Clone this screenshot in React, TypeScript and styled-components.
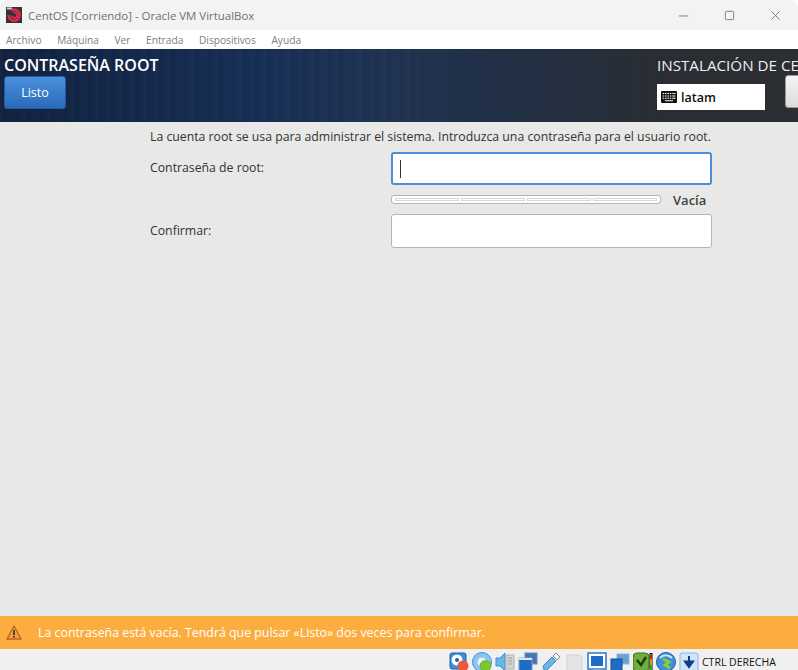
import styled, { createGlobalStyle } from "styled-components";

const GlobalStyle = createGlobalStyle`
  html, body {
    margin: 0;
    padding: 0;
    height: 100%;
    overflow: hidden;
  }
  #root {
    height: 100%;
  }
`;

const menuItems = ["Archivo", "Máquina", "Ver", "Entrada", "Dispositivos", "Ayuda"];

const App = () => {
  return (
    <Window>
      <GlobalStyle />
      <TitleBar>
        <AppIcon viewBox="0 0 16 16">
          <rect width="16" height="16" fill="#33343a" />
          <rect x="1" y="0.5" width="5" height="2" fill="#d4d4d4" />
          <path d="M5 3.6a5.6 5.6 0 1 1-2.4 4.4" fill="none" stroke="#e0284a" strokeWidth="2.4" />
          <path d="M7.4 5.6a2.8 2.8 0 1 1-1.6 3" fill="none" stroke="#e0284a" strokeWidth="2" />
        </AppIcon>
        <WindowTitle>CentOS [Corriendo] - Oracle VM VirtualBox</WindowTitle>
        <WindowControls>
          <ControlIcon viewBox="0 0 12 12">
            <path d="M1 6.5h10" />
          </ControlIcon>
          <ControlIcon viewBox="0 0 12 12">
            <rect x="1.5" y="1.5" width="9" height="9" rx="1" />
          </ControlIcon>
          <ControlIcon viewBox="0 0 12 12">
            <path d="M1.5 1.5l9 9M10.5 1.5l-9 9" />
          </ControlIcon>
        </WindowControls>
      </TitleBar>

      <MenuBar>
        {menuItems.map((item) => (
          <MenuItem key={item}>{item}</MenuItem>
        ))}
      </MenuBar>

      <Header>
        <HeaderLeft>
          <SpokeTitle>CONTRASEÑA ROOT</SpokeTitle>
          <DoneButton type="button">Listo</DoneButton>
        </HeaderLeft>
        <HeaderRight>
          <ProductTitle>INSTALACIÓN DE CENTOS 7</ProductTitle>
          <HeaderControls>
            <KeyboardBox>
              <KeyboardIcon viewBox="0 0 16 12">
                <rect width="16" height="12" rx="1" fill="#111" />
                <path
                  d="M1.6 2.5h1.6M4 2.5h1.6M6.4 2.5h1.6M8.8 2.5h1.6M11.2 2.5h1.6M13.2 2.5h1.4M1.6 5h1.6M4 5h1.6M6.4 5h1.6M8.8 5h1.6M11.2 5h3.2M1.6 7.3h1.6M4 7.3h1.6M6.4 7.3h1.6M8.8 7.3h1.6M11.2 7.3h3.2M4 9.7h8"
                  stroke="#fff"
                  strokeWidth="1.1"
                />
              </KeyboardIcon>
              <KeyboardLabel>latam</KeyboardLabel>
            </KeyboardBox>
            <HelpButton type="button" />
          </HeaderControls>
        </HeaderRight>
      </Header>

      <Content>
        <Intro>
          La cuenta root se usa para administrar el sistema. Introduzca una contraseña para el usuario root.
        </Intro>
        <FormGrid>
          <FieldLabel>Contraseña de root:</FieldLabel>
          <FocusedField>
            <Caret />
          </FocusedField>
          <MeterRow>
            <Meter>
              <MeterCell />
              <MeterCell />
              <MeterCell />
              <MeterCell />
            </Meter>
            <MeterLabel>Vacía</MeterLabel>
          </MeterRow>
          <FieldLabel $top={8}>Confirmar:</FieldLabel>
          <Field />
        </FormGrid>
      </Content>

      <WarningBar>
        <WarningIcon viewBox="0 0 16 15">
          <path d="M8 1L15 14H1Z" fill="#f0a044" stroke="#c4621c" strokeWidth="1.4" strokeLinejoin="round" />
          <path d="M8 5v5" stroke="#3b2a1a" strokeWidth="1.6" />
          <rect x="7.2" y="11" width="1.6" height="1.6" fill="#3b2a1a" />
        </WarningIcon>
        <WarningText>La contraseña está vacía. Tendrá que pulsar «Listo» dos veces para confirmar.</WarningText>
      </WarningBar>

      <StatusBar>
        <StatusIcon viewBox="0 0 20 20">
          <rect x="1" y="1" width="16" height="16" rx="2" fill="#3f8fd8" stroke="#1f5fa8" />
          <circle cx="8" cy="8" r="5.5" fill="#fff" />
          <circle cx="8" cy="8" r="2" fill="#1f5fa8" />
          <circle cx="14" cy="14" r="5.5" fill="#ea5a3a" />
        </StatusIcon>
        <StatusIcon viewBox="0 0 20 20">
          <circle cx="10" cy="10" r="9.5" fill="#8cc6ee" stroke="#3f8fd8" />
          <circle cx="10" cy="10" r="4.5" fill="#e4f2fb" />
          <circle cx="13.5" cy="14" r="5.5" fill="#78c832" stroke="#4f9a1a" strokeWidth="0.6" />
        </StatusIcon>
        <StatusIcon viewBox="0 0 20 20">
          <path d="M1 6h4l5-5v18l-5-5H1Z" fill="#6ab4e8" stroke="#3f8fd8" />
          <rect x="11" y="3" width="8" height="14" fill="#d4d4d4" stroke="#b0b0b0" />
          <path d="M13 6h4M13 9h4M13 12h4" stroke="#9a9a9a" />
        </StatusIcon>
        <StatusIcon viewBox="0 0 20 20">
          <rect x="7" y="1" width="12" height="11" fill="#3f78b8" stroke="#7a8aa0" />
          <rect x="1" y="6" width="13" height="13" fill="#1c6cc8" stroke="#8a9bb0" />
          <rect x="1" y="6" width="13" height="2" fill="#dfe7f0" />
        </StatusIcon>
        <StatusIcon viewBox="0 0 20 20">
          <path d="M2 14L11 5l4 4-9 9H3Z" fill="#6ab4e8" stroke="#3f8fd8" />
          <path d="M12 4l3-3 4 4-3 3Z" fill="#f2f2f2" stroke="#8a8a8a" />
        </StatusIcon>
        <StatusIcon viewBox="0 0 20 20">
          <path d="M3 3h12l3 2v14H3Z" fill="#e4e4e4" stroke="#d2d2d2" />
        </StatusIcon>
        <StatusIcon viewBox="0 0 20 20">
          <rect x="1" y="1" width="18" height="16" fill="#fff" stroke="#1c6cc8" strokeWidth="1.4" />
          <rect x="4" y="4" width="12" height="10" fill="#1c6cc8" />
          <rect x="6" y="17.5" width="8" height="1.5" fill="#9ab4d0" />
        </StatusIcon>
        <StatusIcon viewBox="0 0 20 20">
          <rect x="7" y="2" width="12" height="10" fill="#6a9fd8" stroke="#9ab4d0" />
          <rect x="1" y="7" width="11" height="12" fill="#1c6cc8" stroke="#144f96" />
        </StatusIcon>
        <StatusIcon viewBox="0 0 20 20">
          <rect x="0" y="1" width="16" height="18" rx="4" fill="#6fae3c" stroke="#3c6e1c" />
          <path d="M4 8l4 5 5-8" fill="none" stroke="#1f3d0c" strokeWidth="2.4" />
          <rect x="16.5" y="1" width="3" height="18" fill="#111" />
          <rect x="17.2" y="2" width="1.6" height="5" fill="#e22" />
          <rect x="17.2" y="7" width="1.6" height="6" fill="#f2c81c" />
          <rect x="17.2" y="13" width="1.6" height="5" fill="#3cc83c" />
        </StatusIcon>
        <StatusIcon viewBox="0 0 20 20">
          <circle cx="10" cy="10" r="9.5" fill="#3f8fd8" stroke="#1f5fa8" />
          <path d="M4 6c4-4 9-3 12 0" fill="none" stroke="#cfe6f8" strokeWidth="2" />
          <path d="M7 7l6 3-4 3 5 3" fill="none" stroke="#8ad02c" strokeWidth="3" />
        </StatusIcon>
        <StatusIcon viewBox="0 0 20 20">
          <rect x="1" y="1" width="18" height="18" rx="2" fill="#cfe6f8" stroke="#8ab8e0" />
          <path d="M10 4v7M6 9.5h8L10 15Z" fill="#0c3f86" stroke="#0c3f86" strokeWidth="2" />
        </StatusIcon>
        <HostKey>CTRL DERECHA</HostKey>
      </StatusBar>
    </Window>
  );
};

export default App;

const Window = styled.div`
  width: 798px;
  height: 670px;
  display: flex;
  flex-direction: column;
  overflow: hidden;
  background: #fff;
`;

const TitleBar = styled.div`
  height: 30px;
  flex: none;
  display: flex;
  align-items: center;
  padding-left: 6px;
  border-radius: 7px 7px 0 0;
  background: #f3f3f3;
`;

const AppIcon = styled.svg`
  width: 16px;
  height: 16px;
  flex: none;
`;

const WindowTitle = styled.span`
  margin-left: 6px;
  font: 11.45px "Open Sans", sans-serif;
  color: #707070;
  white-space: nowrap;
`;

const WindowControls = styled.div`
  margin-left: auto;
  display: flex;
  align-items: center;
  gap: 35px;
  padding-right: 17px;
`;

const ControlIcon = styled.svg`
  width: 11px;
  height: 11px;
  fill: none;
  stroke: #777;
  stroke-width: 1;
`;

const MenuBar = styled.div`
  height: 19px;
  flex: none;
  display: flex;
  align-items: center;
  gap: 15.6px;
  padding-left: 6px;
  background: #fff;
`;

const MenuItem = styled.span`
  font: 10.2px "Open Sans", sans-serif;
  color: #7d7d7d;
`;

const Header = styled.div`
  height: 73px;
  flex: none;
  display: grid;
  grid-template-columns: 657px 1fr;
  overflow: hidden;
  background:
    repeating-linear-gradient(
        90deg,
        rgba(255, 255, 255, 0.012) 0 3px,
        rgba(0, 0, 0, 0.03) 3px 7px,
        rgba(255, 255, 255, 0.006) 7px 12px
      )
      0 0 / 420px 100% no-repeat,
    linear-gradient(90deg, #122240 0%, #14294d 20%, #172f56 33%, #1f3250 50%, #232f40 70%, #2a2d33 83%, #2b2e32 100%);
`;

const HeaderLeft = styled.div`
  display: flex;
  flex-direction: column;
  align-items: flex-start;
  padding: 7px 0 0 4px;
`;

const SpokeTitle = styled.div`
  font: 600 16px/18px "Open Sans", sans-serif;
  color: #fff;
  white-space: nowrap;
`;

const DoneButton = styled.button`
  width: 62px;
  height: 33px;
  margin-top: 2px;
  padding: 0;
  border: 1px solid #1f5da6;
  border-radius: 3px;
  background: linear-gradient(#4a90dc, #2a6bb9);
  color: #fff;
  font: 12.5px "Open Sans", sans-serif;
`;

const HeaderRight = styled.div`
  display: flex;
  flex-direction: column;
  min-width: 0;
  padding-top: 7px;
`;

const ProductTitle = styled.div`
  font: 15.2px/18px "Open Sans", sans-serif;
  color: #eceef0;
  white-space: nowrap;
`;

const HeaderControls = styled.div`
  display: flex;
  align-items: flex-start;
  margin-top: 1px;
`;

const KeyboardBox = styled.div`
  width: 108px;
  height: 26px;
  margin-top: 9px;
  flex: none;
  display: flex;
  align-items: center;
  gap: 4px;
  padding-left: 4px;
  box-sizing: border-box;
  background: #fff;
`;

const KeyboardIcon = styled.svg`
  width: 16px;
  height: 12px;
`;

const KeyboardLabel = styled.span`
  font: 600 12.5px "Open Sans", sans-serif;
  color: #111;
`;

const HelpButton = styled.button`
  width: 60px;
  height: 33px;
  margin-left: 20px;
  flex: none;
  padding: 0;
  border: 1px solid #999;
  border-radius: 3px;
  background: linear-gradient(#f4f4f4, #dcdcdc);
`;

const Content = styled.div`
  flex: 1;
  padding: 6px 0 0 150px;
  background: #e8e8e7;
`;

const Intro = styled.div`
  font: 12.28px/17px "Open Sans", sans-serif;
  color: #2e3436;
  white-space: nowrap;
`;

const FormGrid = styled.div`
  display: grid;
  grid-template-columns: 241px 321px;
  margin-top: 7px;
  align-items: start;
`;

const FieldLabel = styled.label<{ $top?: number }>`
  grid-column: 1;
  padding-top: ${({ $top = 7 }) => $top}px;
  font: 12.28px/17px "Open Sans", sans-serif;
  color: #2e3436;
`;

const Field = styled.div`
  grid-column: 2;
  height: 34px;
  box-sizing: border-box;
  border: 1px solid #b5b5b3;
  border-radius: 3px;
  background: #fff;
`;

const FocusedField = styled.div`
  grid-column: 2;
  height: 33px;
  box-sizing: border-box;
  display: flex;
  align-items: center;
  padding-left: 7px;
  border: 2px solid #4a90d9;
  border-radius: 3px;
  background: #fff;
`;

const Caret = styled.span`
  width: 1px;
  height: 18px;
  background: #2e3436;
`;

const MeterRow = styled.div`
  grid-column: 2;
  display: flex;
  align-items: center;
  height: 29px;
`;

const Meter = styled.div`
  width: 270px;
  height: 9px;
  box-sizing: border-box;
  display: flex;
  gap: 2px;
  padding: 2px 3px;
  border: 1px solid #b5b5b3;
  border-radius: 3px;
  background: #fff;
`;

const MeterCell = styled.span`
  flex: 1;
  border: 1px solid #d8d8d8;
`;

const MeterLabel = styled.span`
  margin-left: 12px;
  font: 600 13px "Open Sans", sans-serif;
  color: #3c4042;
`;

const WarningBar = styled.div`
  height: 33px;
  flex: none;
  display: flex;
  align-items: center;
  padding-left: 6px;
  background: #fcad3f;
`;

const WarningIcon = styled.svg`
  width: 16px;
  height: 15px;
  flex: none;
`;

const WarningText = styled.span`
  margin-left: 16px;
  font: 12.36px "Open Sans", sans-serif;
  color: #fff;
  white-space: nowrap;
`;

const StatusBar = styled.div`
  height: 21px;
  flex: none;
  box-sizing: border-box;
  display: flex;
  align-items: center;
  justify-content: flex-end;
  gap: 3px;
  padding: 4px 21px 0 0;
  background: #f0f0f0;
`;

const StatusIcon = styled.svg`
  width: 20px;
  height: 20px;
  flex: none;
`;

const HostKey = styled.span`
  width: 75px;
  font: 10.5px "Open Sans", sans-serif;
  color: #111;
  white-space: nowrap;
`;
